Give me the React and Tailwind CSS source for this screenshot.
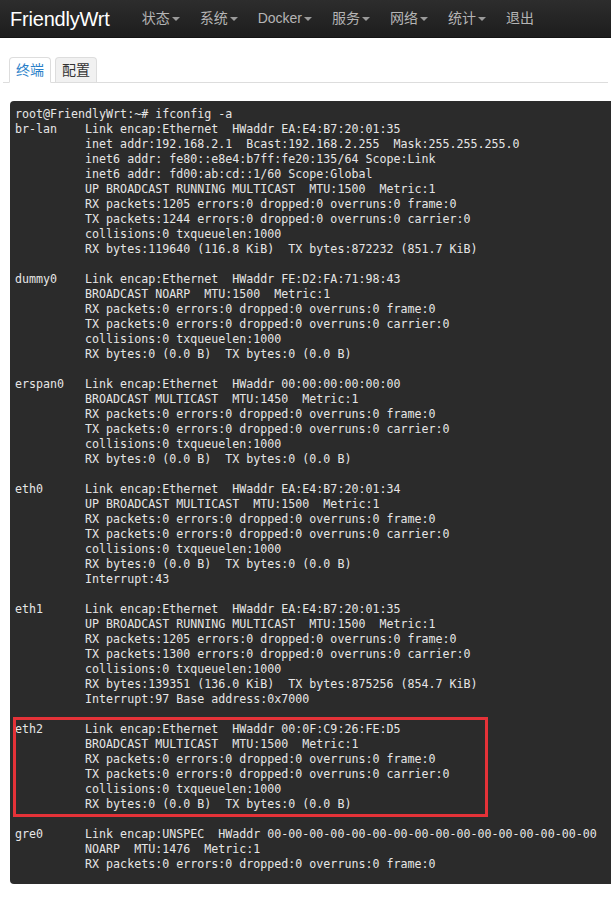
const output = `root@FriendlyWrt:~# ifconfig -a
br-lan    Link encap:Ethernet  HWaddr EA:E4:B7:20:01:35
          inet addr:192.168.2.1  Bcast:192.168.2.255  Mask:255.255.255.0
          inet6 addr: fe80::e8e4:b7ff:fe20:135/64 Scope:Link
          inet6 addr: fd00:ab:cd::1/60 Scope:Global
          UP BROADCAST RUNNING MULTICAST  MTU:1500  Metric:1
          RX packets:1205 errors:0 dropped:0 overruns:0 frame:0
          TX packets:1244 errors:0 dropped:0 overruns:0 carrier:0
          collisions:0 txqueuelen:1000
          RX bytes:119640 (116.8 KiB)  TX bytes:872232 (851.7 KiB)

dummy0    Link encap:Ethernet  HWaddr FE:D2:FA:71:98:43
          BROADCAST NOARP  MTU:1500  Metric:1
          RX packets:0 errors:0 dropped:0 overruns:0 frame:0
          TX packets:0 errors:0 dropped:0 overruns:0 carrier:0
          collisions:0 txqueuelen:1000
          RX bytes:0 (0.0 B)  TX bytes:0 (0.0 B)

erspan0   Link encap:Ethernet  HWaddr 00:00:00:00:00:00
          BROADCAST MULTICAST  MTU:1450  Metric:1
          RX packets:0 errors:0 dropped:0 overruns:0 frame:0
          TX packets:0 errors:0 dropped:0 overruns:0 carrier:0
          collisions:0 txqueuelen:1000
          RX bytes:0 (0.0 B)  TX bytes:0 (0.0 B)

eth0      Link encap:Ethernet  HWaddr EA:E4:B7:20:01:34
          UP BROADCAST MULTICAST  MTU:1500  Metric:1
          RX packets:0 errors:0 dropped:0 overruns:0 frame:0
          TX packets:0 errors:0 dropped:0 overruns:0 carrier:0
          collisions:0 txqueuelen:1000
          RX bytes:0 (0.0 B)  TX bytes:0 (0.0 B)
          Interrupt:43

eth1      Link encap:Ethernet  HWaddr EA:E4:B7:20:01:35
          UP BROADCAST RUNNING MULTICAST  MTU:1500  Metric:1
          RX packets:1205 errors:0 dropped:0 overruns:0 frame:0
          TX packets:1300 errors:0 dropped:0 overruns:0 carrier:0
          collisions:0 txqueuelen:1000
          RX bytes:139351 (136.0 KiB)  TX bytes:875256 (854.7 KiB)
          Interrupt:97 Base address:0x7000

eth2      Link encap:Ethernet  HWaddr 00:0F:C9:26:FE:D5
          BROADCAST MULTICAST  MTU:1500  Metric:1
          RX packets:0 errors:0 dropped:0 overruns:0 frame:0
          TX packets:0 errors:0 dropped:0 overruns:0 carrier:0
          collisions:0 txqueuelen:1000
          RX bytes:0 (0.0 B)  TX bytes:0 (0.0 B)

gre0      Link encap:UNSPEC  HWaddr 00-00-00-00-00-00-00-00-00-00-00-00-00-00-00-00
          NOARP  MTU:1476  Metric:1
          RX packets:0 errors:0 dropped:0 overruns:0 frame:0`

const menu = [
    { label: '状态', caret: true },
    { label: '系统', caret: true },
    { label: 'Docker', caret: true },
    { label: '服务', caret: true },
    { label: '网络', caret: true },
    { label: '统计', caret: true },
    { label: '退出', caret: false },
]

function Caret() {
    return (
        <span className="ml-[2px] inline-block w-0 h-0 border-t-[4px] border-t-[#9a9a9a] border-x-[4px] border-x-transparent align-middle mt-[1px]" />
    )
}

export default function App() {
    return (
        <div className="w-[611px] h-[898px] overflow-hidden bg-white font-['Liberation_Sans','Noto_Sans_CJK_SC',sans-serif]">
            <div className="h-[38px] flex items-center bg-gradient-to-b from-[#2d2d2d] to-[#1d1d1d] border-b border-[#141414]">
                <div className="pl-[10px] pr-[22px] text-[20px] text-white tracking-[-0.2px]">FriendlyWrt</div>
                <ul className="flex items-center">
                    {menu.map((m) => (
                        <li key={m.label} className="px-[10px] text-[14px] text-[#b5b5b5] flex items-center">
                            {m.label}
                            {m.caret && <Caret />}
                        </li>
                    ))}
                </ul>
            </div>

            <div className="pt-[19px] px-[3px]">
                <ul className="flex border-b border-[#dddddd] h-[26px]">
                    <li className="ml-[6px] h-[26px] px-[6px] flex items-center text-[14px] text-[#2a7fc9] bg-white border border-[#dddddd] border-b-white rounded-t-[4px]">
                        终端
                    </li>
                    <li className="ml-[4px] h-[25px] px-[6px] flex items-center text-[14px] text-[#333333] bg-[#f1f1f1] border border-[#dddddd] border-b-0 rounded-t-[4px]">
                        配置
                    </li>
                </ul>
            </div>

            <div className="pt-[18px] pl-[10px]">
                <div className="relative w-[640px] bg-[#2b2b2b] rounded-[4px] pl-[5px] pt-[6px] pb-[12px]">
                    <pre className="whitespace-pre text-[11.65px] leading-[15px] text-[#e6e6e6] font-['DejaVu_Sans_Mono','Liberation_Mono',monospace]">
                        {output}
                    </pre>
                    <div className="absolute left-[3px] top-[616px] w-[475px] h-[100px] border-[3px] border-[#e53238]" />
                </div>
            </div>
        </div>
    )
}
